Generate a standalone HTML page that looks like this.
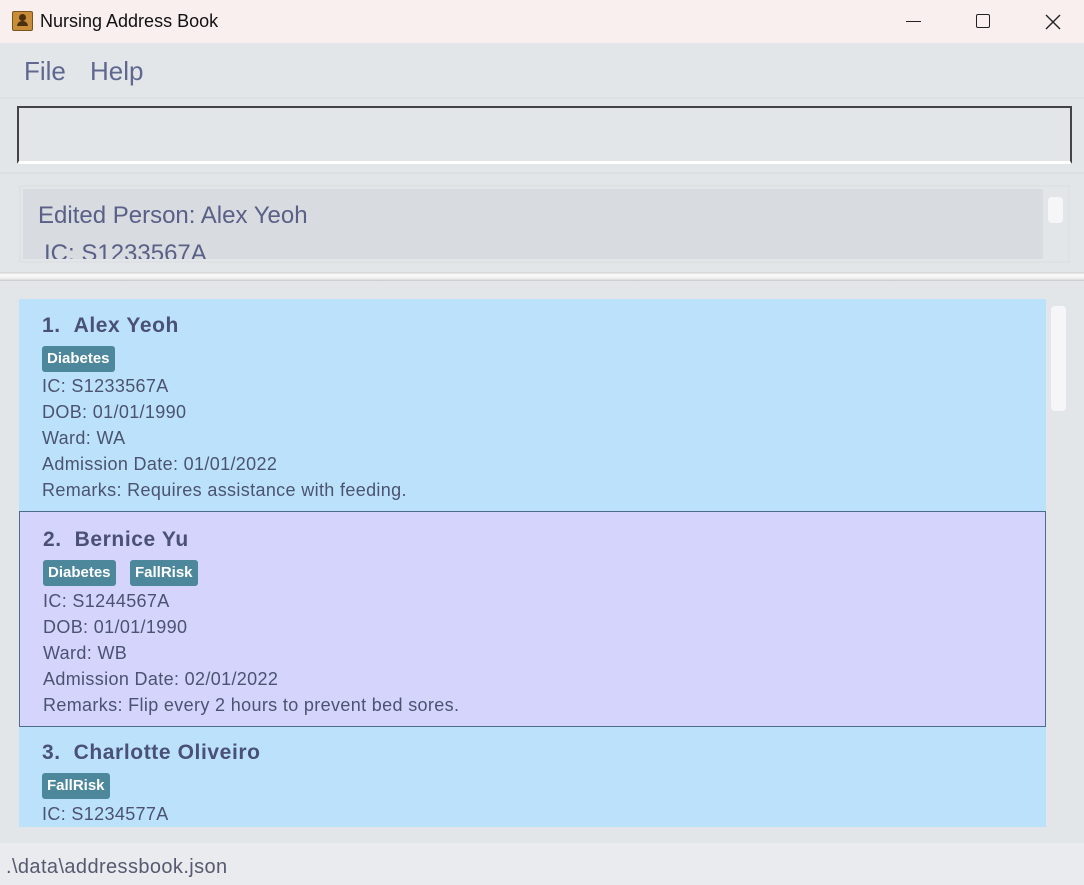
<!DOCTYPE html>
<html><head><meta charset="utf-8"><style>
*{margin:0;padding:0;box-sizing:border-box}
body{width:1084px;height:885px;position:relative;background:#e3e6e9;font-family:"Liberation Sans",sans-serif;overflow:hidden}
.a{position:absolute}
.t{white-space:nowrap}
.card{position:absolute;left:19px;width:1027px;background:#bbe2fa;color:#4c5370}
.nm{position:absolute;font-weight:bold;font-size:21px;color:#4a5078;letter-spacing:0.6px}
.tag{position:absolute;height:26px;background:#4d879c;color:#fff;font-weight:bold;font-size:15px;line-height:26px;padding:0 5px;border-radius:3px}
.ln{position:absolute;font-size:18px;line-height:26px;letter-spacing:0.35px}
</style></head><body>
<div class="a" style="left:0;top:0;width:1084px;height:43px;background:#f8efee"></div>
<div class="a" style="left:12px;top:11px;width:21px;height:20px;background:#c98d3a;border:1px solid #7a5520;border-radius:2px"></div>
<div class="a" style="left:19px;top:14px;width:7px;height:7px;background:#4a3010;border-radius:50%"></div>
<div class="a" style="left:17px;top:21px;width:11px;height:5px;background:#4a3010;border-radius:5px 5px 0 0"></div>
<div class="a t" style="left:40px;top:11px;font-size:18px;color:#111">Nursing Address Book</div>
<div class="a" style="left:906px;top:21px;width:15px;height:1px;background:#222"></div>
<div class="a" style="left:976px;top:14px;width:14px;height:14px;border:1.5px solid #222;border-radius:2px"></div>
<svg class="a" style="left:1045px;top:14px" width="16" height="16"><path d="M1 1L15 15M15 1L1 15" stroke="#222" stroke-width="1.4"/></svg>
<div class="a t" style="left:24px;top:56px;font-size:26px;color:#606890">File</div>
<div class="a t" style="left:90px;top:56px;font-size:26px;color:#606890">Help</div>
<div class="a" style="left:0;top:97px;width:1084px;height:2px;background:#dde0e3"></div>
<div class="a" style="left:17px;top:106px;width:1055px;height:58px;border:2px solid #444;border-bottom:3px solid #fff;background:#e3e6e9"></div>
<div class="a" style="left:0;top:172px;width:1084px;height:2px;background:#dde0e3"></div>
<div class="a" style="left:19px;top:185px;width:1051px;height:78px;border:2px solid #dfe2e5"></div>
<div class="a" style="left:23px;top:189px;width:1020px;height:70px;background:#d8dbdf;overflow:hidden">
<div class="a t" style="left:15px;top:13px;font-size:24px;color:#5a6088">Edited Person: Alex Yeoh</div>
<div class="a t" style="left:21px;top:51px;font-size:24px;color:#5a6088">IC: S1233567A</div></div>
<div class="a" style="left:1048px;top:197px;width:15px;height:26px;background:#f6f6f8;border-radius:4px"></div>
<div class="a" style="left:0;top:272px;width:1084px;height:9px;background:linear-gradient(#cfcfcf,#fafafa 30%,#f0f0f0 70%,#c8c8c8)"></div>
<div class="card" style="top:299px;height:212px">
<div class="nm t" style="left:23px;top:15px">1.&nbsp;&nbsp;Alex Yeoh</div>
<div class="tag t" style="left:23px;top:47px">Diabetes</div>
<div class="ln t" style="left:23px;top:74px">IC: S1233567A</div>
<div class="ln t" style="left:23px;top:100px">DOB: 01/01/1990</div>
<div class="ln t" style="left:23px;top:126px">Ward: WA</div>
<div class="ln t" style="left:23px;top:152px">Admission Date: 01/01/2022</div>
<div class="ln t" style="left:23px;top:178px">Remarks: Requires assistance with feeding.</div></div>
<div class="card" style="top:511px;height:216px;background:#d4d4fc;border:1.5px solid #4e6d8c">
<div class="nm t" style="left:23px;top:16px">2.&nbsp;&nbsp;Bernice Yu</div>
<div class="tag t" style="left:23px;top:48px">Diabetes</div>
<div class="tag t" style="left:110px;top:48px">FallRisk</div>
<div class="ln t" style="left:23px;top:76px">IC: S1244567A</div>
<div class="ln t" style="left:23px;top:102px">DOB: 01/01/1990</div>
<div class="ln t" style="left:23px;top:128px">Ward: WB</div>
<div class="ln t" style="left:23px;top:154px">Admission Date: 02/01/2022</div>
<div class="ln t" style="left:23px;top:180px">Remarks: Flip every 2 hours to prevent bed sores.</div></div>
<div class="card" style="top:727px;height:100px;overflow:hidden">
<div class="nm t" style="left:23px;top:14px">3.&nbsp;&nbsp;Charlotte Oliveiro</div>
<div class="tag t" style="left:23px;top:46px">FallRisk</div>
<div class="ln t" style="left:23px;top:74px">IC: S1234577A</div></div>
<div class="a" style="left:1051px;top:306px;width:15px;height:105px;background:#f6f6f8;border-radius:4px"></div>
<div class="a" style="left:0;top:843px;width:1084px;height:42px;background:#e9ebee"></div>
<div class="a t" style="left:6px;top:856px;font-size:20px;color:#555a70;letter-spacing:0.4px">.\data\addressbook.json</div>
</body></html>
